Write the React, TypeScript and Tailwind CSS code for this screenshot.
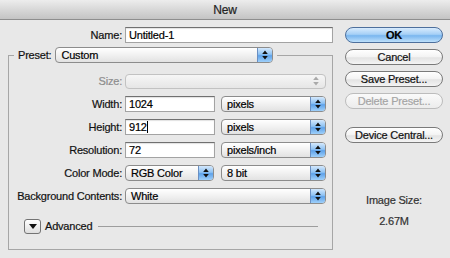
import React from "react";

const Arrows = ({ color = "#111" }: { color?: string }) => (
  <svg width="6" height="10" viewBox="0 0 6 10">
    <path d="M3 0.5 L5.8 4 H0.2 Z M3 9.5 L5.8 6 H0.2 Z" fill={color} />
  </svg>
);

type SelectProps = {
  value?: string;
  className: string;
  disabled?: boolean;
};

function Select({ value, className, disabled }: SelectProps) {
  if (disabled) {
    return (
      <div
        className={`${className} h-[15px] flex items-center justify-end pr-[6px] rounded-[4px] border border-[#c2c2c2] bg-[linear-gradient(180deg,#f6f6f6,#e6e6e6)]`}
      >
        <Arrows color="#a9a9a9" />
      </div>
    );
  }
  return (
    <div
      className={`${className} h-[16px] flex items-stretch rounded-[4px] border border-[#8c8c8c] bg-[linear-gradient(180deg,#ffffff_0%,#f1f1f1_50%,#e2e2e2_100%)] overflow-hidden`}
    >
      <div className="flex-1 pl-[5px] leading-[14px] text-black truncate">
        {value}
      </div>
      <div className="w-[15px] flex items-center justify-center border-l border-[#6a8fc2] bg-[linear-gradient(180deg,#d4e8fc_0%,#8ec2f3_45%,#5ea2ea_55%,#9fd0fa_100%)]">
        <Arrows />
      </div>
    </div>
  );
}

function Field({ value, className, caret }: { value: string; className: string; caret?: boolean }) {
  return (
    <div
      className={`${className} h-[16px] flex items-center pl-[3px] bg-white border border-[#a3a3a3] border-t-[#707070] shadow-[inset_0_1px_1px_rgba(0,0,0,0.12)] text-black`}
    >
      {value}
      {caret && <span className="w-px h-[12px] bg-black" />}
    </div>
  );
}

function Row({ label, dim, children }: { label: string; dim?: boolean; children: React.ReactNode }) {
  return (
    <div className="h-[23px] flex items-center gap-[3px]">
      <span className={`w-[113px] text-right ${dim ? "text-[#8d8d8d]" : "text-[#111]"}`}>
        {label}
      </span>
      {children}
    </div>
  );
}

function AquaButton({ label, primary, disabled }: { label: string; primary?: boolean; disabled?: boolean }) {
  const skin = primary
    ? "border-[#4d6f9c] bg-[linear-gradient(180deg,#d8ebfd_0%,#a6d0f6_45%,#7ab6ef_55%,#bde0fb_100%)] font-bold text-black"
    : disabled
    ? "border-[#bcbcbc] bg-[linear-gradient(180deg,#fafafa,#ececec)] text-[#a5a5a5]"
    : "border-[#7a7a7a] bg-[linear-gradient(180deg,#ffffff_0%,#f3f3f3_50%,#e3e3e3_55%,#f4f4f4_100%)] text-[#111]";
  return (
    <button className={`w-[98px] h-[16px] rounded-full border ${skin} flex items-center justify-center leading-none`}>
      {label}
    </button>
  );
}

export default function App() {
  return (
    <div className="w-[450px] h-[258px] bg-[#e8e8e8] flex flex-col font-['Liberation_Sans',Arial,sans-serif] text-[11px] tracking-[-0.2px] [-webkit-text-stroke:0.2px] overflow-hidden">
      <div className="h-[20px] shrink-0 flex items-center justify-center border-b border-[#8e8e8e] bg-[linear-gradient(180deg,#ededed_0%,#d8d8d8_50%,#c4c4c4_100%)] text-[12px] text-[#222]">
        New
      </div>

      <div className="flex pl-[8px] pt-[7px]">
        {/* left side */}
        <div className="w-[325px] flex flex-col">
          <div className="h-[16px] flex items-center gap-[3px]">
            <span className="w-[114px] text-right text-[#111]">Name:</span>
            <Field value="Untitled-1" className="w-[208px]" />
          </div>

          <fieldset className="mt-[4px] border border-[#a6a6a6] pb-[14px]">
            <legend className="ml-[5px] px-[4px]">
              <div className="flex items-center gap-[4px]">
                <span className="text-[#111]">Preset:</span>
                <Select value="Custom" className="w-[218px]" />
              </div>
            </legend>

            <div className="pt-[6px] flex flex-col">
              <Row label="Size:" dim>
                <Select disabled className="w-[201px]" />
              </Row>
              <Row label="Width:">
                <Field value="1024" className="w-[90px]" />
                <Select value="pixels" className="w-[105px] ml-[3px]" />
              </Row>
              <Row label="Height:">
                <Field value="912" caret className="w-[90px]" />
                <Select value="pixels" className="w-[105px] ml-[3px]" />
              </Row>
              <Row label="Resolution:">
                <Field value="72" className="w-[90px]" />
                <Select value="pixels/inch" className="w-[105px] ml-[3px]" />
              </Row>
              <Row label="Color Mode:">
                <Select value="RGB Color" className="w-[89px]" />
                <Select value="8 bit" className="w-[105px] ml-[4px]" />
              </Row>
              <Row label="Background Contents:">
                <Select value="White" className="w-[201px]" />
              </Row>

              <div className="mt-[10px] h-[17px] flex items-center pl-[15px] pr-[14px]">
                <div className="w-[17px] h-[15px] rounded-[3px] border border-[#737373] bg-[linear-gradient(180deg,#ffffff,#dedede)] flex items-center justify-center">
                  <svg width="8" height="5" viewBox="0 0 8 5">
                    <path d="M0 0 H8 L4 5 Z" fill="#111" />
                  </svg>
                </div>
                <span className="ml-[4px] text-[#111]">Advanced</span>
                <div className="flex-1 h-px bg-[#9d9d9d] ml-[6px]" />
              </div>
            </div>
          </fieldset>
        </div>

        {/* right side */}
        <div className="ml-[12px] w-[98px] flex flex-col">
          <div className="flex flex-col gap-[6px]">
            <AquaButton label="OK" primary />
            <AquaButton label="Cancel" />
            <AquaButton label="Save Preset..." />
            <AquaButton label="Delete Preset..." disabled />
          </div>
          <div className="mt-[18px]">
            <AquaButton label="Device Central..." />
          </div>
          <div className="mt-[49px] flex flex-col items-center gap-[4px] text-[#333]">
            <span>Image Size:</span>
            <span>2.67M</span>
          </div>
        </div>
      </div>
    </div>
  );
}
